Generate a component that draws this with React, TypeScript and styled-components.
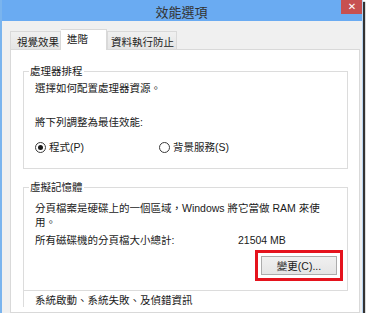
import styled, { createGlobalStyle } from "styled-components";

const GlobalStyle = createGlobalStyle`
  body {
    margin: 0;
    background: #ffffff;
    font-family: "Liberation Sans", "Noto Sans CJK TC", sans-serif;
  }
`;

const Window = styled.div`
  box-sizing: border-box;
  width: 363px;
  height: 313px;
  background: #f0f0f0;
  border-left: 2px solid #7ab4ee;
  border-right: 1px solid #b9d4f0;
  box-shadow: 2px 2px 1px rgba(0, 0, 0, 0.8);
  overflow: hidden;
  display: flex;
  flex-direction: column;
`;

const TitleBar = styled.div`
  height: 21px;
  margin-left: -2px;
  margin-right: -1px;
  background: #6aabf2;
  display: flex;
  align-items: flex-start;
  justify-content: center;
  position: relative;
`;

const Title = styled.span`
  font-family: "Noto Sans CJK TC", sans-serif;
  font-size: 13px;
  line-height: 15px;
  margin-top: 4px;
  color: #333333;
`;

const CloseButton = styled.div`
  position: absolute;
  top: 0;
  right: 0;
  width: 22px;
  height: 14px;
  background: #c75050;
  color: #ffffff;
  font-family: "DejaVu Sans", sans-serif;
  font-weight: bold;
  font-size: 10px;
  line-height: 13px;
  text-align: center;
`;

const Body = styled.div`
  flex: 1;
  padding: 8px 2px 0 8px;
  display: flex;
  flex-direction: column;
  min-height: 0;
`;

const TabRow = styled.div`
  display: flex;
  align-items: flex-end;
  margin-bottom: -1px;
  position: relative;
  z-index: 1;
`;

const Tab = styled.div<{ $active?: boolean; $width: number; $pad: number }>`
  box-sizing: border-box;
  width: ${(p) => p.$width}px;
  height: ${(p) => (p.$active ? 21 : 18)}px;
  margin-bottom: ${(p) => (p.$active ? 0 : 1)}px;
  padding-left: ${(p) => p.$pad}px;
  padding-top: ${(p) => (p.$active ? 2 : 3)}px;
  border: 1px solid #d9d9d9;
  border-bottom: none;
  ${(p) => (p.$active ? "border-left: none;" : "")}
  background: ${(p) =>
    p.$active ? "#ffffff" : "linear-gradient(#f0f0f0, #e5e5e5)"};
  font-size: 10.5px;
  line-height: 14px;
  color: #1a1a1a;
  white-space: nowrap;
`;

const Panel = styled.div`
  flex: 1;
  background: #ffffff;
  border: 1px solid #d9d9d9;
  padding: 14px 11px 0 12px;
`;

const Group = styled.fieldset<{ $top?: number }>`
  margin: ${(p) => p.$top ?? 0}px 0 0 0;
  padding: 0;
  border: 1px solid #dcdcdc;
  min-width: 0;
`;

const Legend = styled.legend`
  margin-left: 5px;
  padding: 0 1px;
  font-size: 10.5px;
  line-height: 14px;
  color: #1a1a1a;
`;

const GroupBody = styled.div<{ $pt: number; $pb: number; $pr?: number }>`
  padding: ${(p) => p.$pt}px ${(p) => p.$pr ?? 11}px ${(p) => p.$pb}px 11px;
  display: flex;
  flex-direction: column;
`;

const Line = styled.div<{ $mt?: number }>`
  margin-top: ${(p) => p.$mt ?? 0}px;
  font-size: 10.5px;
  line-height: 14px;
  color: #1a1a1a;
  white-space: nowrap;
`;

const RadioRow = styled.div`
  margin-top: 11px;
  display: flex;
  align-items: center;
  height: 14px;
`;

const RadioItem = styled.label<{ $width?: number }>`
  display: flex;
  align-items: center;
  gap: 3px;
  width: ${(p) => (p.$width ? `${p.$width}px` : "auto")};
  font-size: 10.5px;
  line-height: 14px;
  color: #1a1a1a;
`;

const RadioCircle = styled.span<{ $checked?: boolean }>`
  box-sizing: border-box;
  width: 11px;
  height: 11px;
  border-radius: 50%;
  border: 1px solid #3a3a3a;
  background: #ffffff;
  display: flex;
  align-items: center;
  justify-content: center;
  &::after {
    content: "";
    width: 5px;
    height: 5px;
    border-radius: 50%;
    background: ${(p) => (p.$checked ? "#1a1a1a" : "transparent")};
  }
`;

const TotalRow = styled.div`
  margin-top: 4px;
  display: flex;
  font-size: 10.5px;
  line-height: 14px;
  color: #1a1a1a;
  white-space: nowrap;
`;

const TotalLabel = styled.span`
  width: 203px;
`;

const ButtonRow = styled.div`
  margin-top: 3px;
  display: flex;
  justify-content: flex-end;
`;

const Highlight = styled.div`
  border: 3px solid #e5131d;
  padding: 3px;
  display: flex;
`;

const Button = styled.button`
  box-sizing: border-box;
  width: 76px;
  height: 19px;
  padding: 0;
  border: 1px solid #acacac;
  background: linear-gradient(#f0f0f0, #e5e5e5);
  font-family: "Liberation Sans", "Noto Sans CJK TC", sans-serif;
  font-size: 10.5px;
  line-height: 14px;
  color: #1a1a1a;
`;

const NextSection = styled.div`
  border-left: 1px solid #dcdcdc;
  padding: 2px 0 0 11px;
  font-size: 10.5px;
  line-height: 14px;
  color: #1a1a1a;
  white-space: nowrap;
`;

export default function App() {
  return (
    <>
      <GlobalStyle />
      <Window>
        <TitleBar>
          <Title>效能選項</Title>
          <CloseButton>✕</CloseButton>
        </TitleBar>
        <Body>
          <TabRow>
            <Tab $width={51} $pad={6}>視覺效果</Tab>
            <Tab $active $width={46} $pad={6}>進階</Tab>
            <Tab $width={70} $pad={3}>資料執行防止</Tab>
          </TabRow>
          <Panel>
            <Group>
              <Legend>處理器排程</Legend>
              <GroupBody $pt={3} $pb={14}>
                <Line>選擇如何配置處理器資源。</Line>
                <Line $mt={20}>將下列調整為最佳效能:</Line>
                <RadioRow>
                  <RadioItem $width={124}>
                    <RadioCircle $checked />
                    程式(P)
                  </RadioItem>
                  <RadioItem>
                    <RadioCircle />
                    背景服務(S)
                  </RadioItem>
                </RadioRow>
              </GroupBody>
            </Group>
            <Group $top={11}>
              <Legend>虛擬記憶體</Legend>
              <GroupBody $pt={7} $pb={9} $pr={4}>
                <Line>分頁檔案是硬碟上的一個區域，Windows 將它當做 RAM 來使</Line>
                <Line>用。</Line>
                <TotalRow>
                  <TotalLabel>所有磁碟機的分頁檔大小總計:</TotalLabel>
                  <span>21504 MB</span>
                </TotalRow>
                <ButtonRow>
                  <Highlight>
                    <Button>變更(C)...</Button>
                  </Highlight>
                </ButtonRow>
              </GroupBody>
            </Group>
            <NextSection>系統啟動、系統失敗、及偵錯資訊</NextSection>
          </Panel>
        </Body>
      </Window>
    </>
  );
}
